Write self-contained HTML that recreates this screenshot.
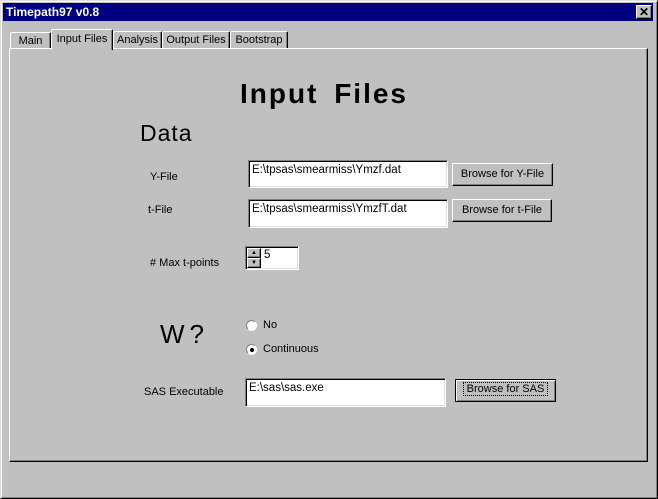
<html><head><style>
body{margin:0;width:658px;height:499px;background:#c0c0c0;position:relative;overflow:hidden;font-family:"Liberation Sans",sans-serif;font-size:11px;color:#000}
.a{position:absolute}
.sunk{background:#fff;border-top:1px solid #808080;border-left:1px solid #808080;border-right:1px solid #fff;border-bottom:1px solid #fff;box-shadow:inset 1px 1px 0 #000,inset -1px -1px 0 #dfdfdf;box-sizing:border-box;padding:3px 3px;font-size:11.5px}
.btn{background:#c0c0c0;border-top:1px solid #fff;border-left:1px solid #fff;border-right:1px solid #000;border-bottom:1px solid #000;box-shadow:inset -1px -1px 0 #808080;box-sizing:border-box;text-align:center;font-size:11px}
.tab{position:absolute;border-top:1px solid #fff;border-left:1px solid #fff;border-right:1px solid #000;box-shadow:inset -1px 0 0 #808080;border-radius:2px 2px 0 0;text-align:center;box-sizing:border-box;font-size:11px;background:#c0c0c0}
.rad{position:absolute;width:11px;height:11px;border-radius:50%;background:#fff;border:1px solid;border-color:#808080 #fff #fff #808080;box-sizing:border-box}
</style></head><body>
<div class="a" style="left:0;top:0;width:656px;height:497px;border-top:1px solid #dfdfdf;border-left:1px solid #dfdfdf;border-right:1px solid #000;border-bottom:1px solid #000;box-shadow:inset 1px 1px 0 #fff,inset -1px -1px 0 #808080"></div>
<div class="a" style="left:3px;top:3px;width:650px;height:18px;background:#000080;color:#fff;font-weight:bold;font-size:12px;line-height:18px;padding-left:3px;box-sizing:border-box">Timepath97 v0.8</div>
<div class="a btn" style="left:636px;top:5px;width:16px;height:14px;font-weight:bold;font-size:12px;line-height:12px">✕</div>
<div class="a" style="left:9px;top:48px;width:639px;height:414px;border-top:1px solid #fff;border-left:1px solid #fff;border-right:1px solid #000;border-bottom:1px solid #000;box-shadow:inset -1px -1px 0 #808080;box-sizing:border-box"></div>
<div class="tab" style="left:10px;top:32px;width:41px;height:16px;line-height:16px">Main</div>
<div class="tab" style="left:162px;top:31px;width:68px;height:17px;line-height:17px">Output Files</div>
<div class="tab" style="left:230px;top:31px;width:58px;height:17px;line-height:17px">Bootstrap</div>
<div class="tab" style="left:113px;top:31px;width:49px;height:17px;line-height:17px">Analysis</div>
<div class="tab" style="left:51px;top:29px;width:62px;height:21px;line-height:18px;border-bottom:none;z-index:2">Input Files</div>
<div class="a" style="left:240px;top:78px;font-size:28px;font-weight:bold;letter-spacing:2px;word-spacing:6px">Input Files</div>
<div class="a" style="left:140px;top:120px;font-size:23px;letter-spacing:1px">Data</div>
<div class="a" style="left:150px;top:171px">Y-File</div>
<div class="a" style="left:148px;top:204px">t-File</div>
<div class="a" style="left:150px;top:257px"># Max t-points</div>
<div class="a sunk" style="left:248px;top:160px;width:200px;height:28px">E:\tpsas\smearmiss\Ymzf.dat</div>
<div class="a sunk" style="left:248px;top:199px;width:200px;height:29px">E:\tpsas\smearmiss\YmzfT.dat</div>
<div class="a btn" style="left:452px;top:163px;width:101px;height:23px;line-height:21px">Browse for Y-File</div>
<div class="a btn" style="left:452px;top:199px;width:100px;height:23px;line-height:21px">Browse for t-File</div>
<div class="a sunk" style="left:245px;top:246px;width:54px;height:24px;padding:2px 0 0 18px">5</div>
<div class="a btn" style="left:247px;top:248px;width:14px;height:10px;font-size:6px;line-height:8px">▲</div>
<div class="a btn" style="left:247px;top:258px;width:14px;height:10px;font-size:6px;line-height:8px">▼</div>
<div class="a" style="left:160px;top:319px;font-size:26px;letter-spacing:5px">W?</div>
<div class="rad" style="left:246px;top:320px"></div>
<div class="a" style="left:263px;top:319px">No</div>
<div class="rad" style="left:246px;top:344px"><div class="a" style="left:3px;top:3px;width:4px;height:4px;border-radius:50%;background:#000"></div></div>
<div class="a" style="left:263px;top:343px">Continuous</div>
<div class="a" style="left:144px;top:386px">SAS Executable</div>
<div class="a sunk" style="left:245px;top:378px;width:201px;height:29px">E:\sas\sas.exe</div>
<div class="a btn" style="left:455px;top:379px;width:101px;height:23px;line-height:19px;border:1px solid #000;box-shadow:inset 1px 1px 0 #fff,inset -1px -1px 0 #808080"><span style="border:1px dotted #000;padding:0 3px">Browse for SAS</span></div>
</body></html>
